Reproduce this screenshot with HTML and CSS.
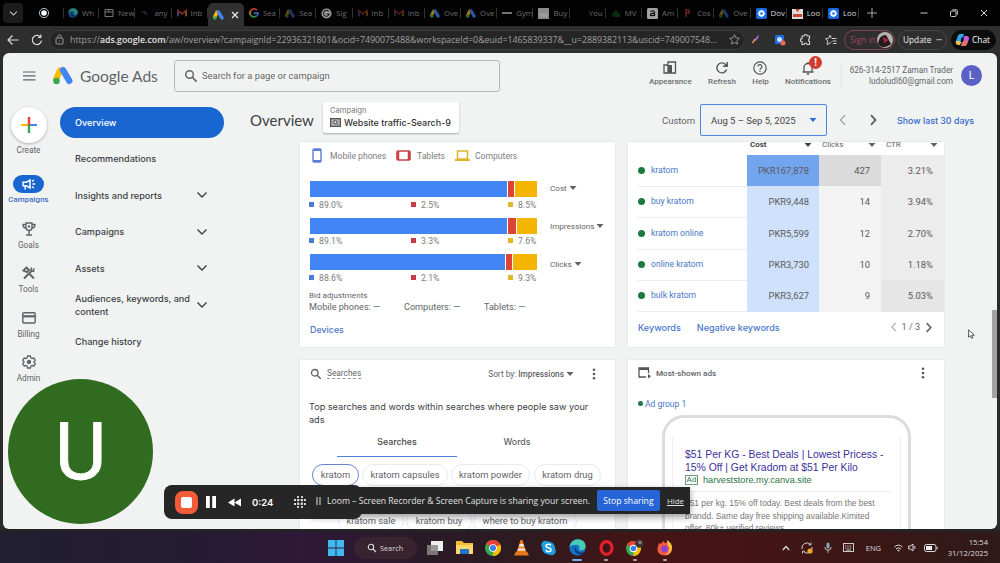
FILE: index.html
```
<!DOCTYPE html>
<html lang="en">
<head>
    <meta charset="UTF-8">
    <meta name="viewport" content="width=device-width, initial-scale=1.0">
    <title>Overview - Google Ads</title>
    <link rel="stylesheet" href="styles.css">
</head>
<body>

    <!-- Shared icons -->
    <svg class="defs" width="0" height="0">
        <symbol id="ads" viewBox="0 0 24 22">
            <path d="M8.5 5 3.6 15.5" stroke="#fbbc04" stroke-width="7.4" stroke-linecap="round"/>
            <path d="M12 4.6 19.6 17.4" stroke="#4285f4" stroke-width="7.6" stroke-linecap="round"/>
            <circle cx="4.2" cy="17.6" r="3.9" fill="#34a853"/>
        </symbol>
        <symbol id="gmail" viewBox="0 0 24 18">
            <path d="M2 17V3l10 8 10-8v14" fill="none" stroke="#c5432f" stroke-width="4"/>
            <path d="M2 17V6" stroke="#4a6fb5" stroke-width="4"/>
            <path d="M22 17V6" stroke="#b98a28" stroke-width="4"/>
        </symbol>
        <symbol id="chrome" viewBox="0 0 24 24">
            <circle cx="12" cy="12" r="12" fill="#34a853"/>
            <path d="M12 12 1.6 6A12 12 0 0 1 22.4 6z" fill="#ea4335"/>
            <path d="M12 12 22.4 6A12 12 0 0 1 12 24z" fill="#fbbc04"/>
            <path d="M10 6h12.4L20 9H10z" fill="#ea4335"/>
            <circle cx="12" cy="12" r="5.8" fill="#fff"/>
            <circle cx="12" cy="12" r="4.5" fill="#3b7ded"/>
        </symbol>
        <symbol id="edge" viewBox="0 0 24 24">
            <circle cx="12" cy="12" r="11.5" fill="#1670c4"/>
            <path d="M.8 11C2 4.5 7 .5 12.5 .5 19 .5 23.5 5 23.5 10c0 4-3 6-6 6-3 0-4-1.5-3-3 1-3-1-5-4.5-5C6 8 3 9 .8 11z" fill="#45cdb6"/>
            <path d="M9 11c-3 4 0 11 7 11 3-.5 5-2 6-4-6 2-12 0-13-7z" fill="#0d3e82"/>
        </symbol>
        <symbol id="loom" viewBox="0 0 20 20">
            <rect width="20" height="20" rx="3" fill="#1668e3"/>
            <circle cx="10" cy="10" r="4.5" fill="none" stroke="#fff" stroke-width="2.5"/>
            <path d="M10 3v14M3 10h14M5 5l10 10M15 5 5 15" stroke="#fff" stroke-width="1.2"/>
            <circle cx="10" cy="10" r="2" fill="#1668e3"/>
        </symbol>
        <symbol id="search" viewBox="0 0 24 24">
            <circle cx="9.5" cy="9.5" r="6.5" fill="none" stroke="currentColor" stroke-width="2.6"/>
            <path d="m14.5 14.5 7 7" stroke="currentColor" stroke-width="3"/>
        </symbol>
        <symbol id="down" viewBox="0 0 12 12">
            <path d="m1.5 3.5 4.5 4.5 4.5-4.5" fill="none" stroke="currentColor" stroke-width="1.4"/>
        </symbol>
        <symbol id="left" viewBox="0 0 12 12">
            <path d="M8 1.2 3.5 6 8 10.8" fill="none" stroke="currentColor" stroke-width="1.4"/>
        </symbol>
        <symbol id="right" viewBox="0 0 12 12">
            <path d="M4 1.2 8.5 6 4 10.8" fill="none" stroke="currentColor" stroke-width="1.7"/>
        </symbol>
        <symbol id="tri" viewBox="0 0 8 8">
            <path d="M.5 2h7L4 6z" fill="currentColor"/>
        </symbol>
        <symbol id="dots" viewBox="0 0 4 14">
            <circle cx="2" cy="2" r="1.5"/><circle cx="2" cy="7" r="1.5"/><circle cx="2" cy="12" r="1.5"/>
        </symbol>
    </svg>

    <!-- Browser tabs -->
    <div class="tabs">
        <div class="tab-list"><svg width="9" height="9"><use href="#down"/></svg></div>
        <svg class="rec" width="12" height="12" viewBox="0 0 12 12"><circle cx="6" cy="6" r="4.6" fill="none" stroke="#a9bccb" stroke-width="1"/><circle cx="6" cy="6" r="2.8" fill="#fff"/></svg>
        <div class="tab first"><svg class="dim" width="10" height="10"><use href="#edge"/></svg><span>Wh</span></div>
        <div class="tab"><svg width="10" height="10" viewBox="0 0 10 10"><path d="M1 1.5h8v7H1zM1 4h8M4.5 1.5V4" fill="none" stroke="#777"/></svg><span>New</span></div>
        <div class="tab"><svg width="10" height="10" viewBox="0 0 10 10"><path d="M2 3l5 4M4 3l3 3" stroke="#1b2533" stroke-width="1.5"/></svg><span>any</span></div>
        <div class="tab"><svg class="dim" width="10" height="8"><use href="#gmail"/></svg><span>Inb</span></div>
        <div class="tab active"><svg width="11" height="10"><use href="#ads"/></svg><svg width="8" height="8" viewBox="0 0 8 8"><path d="m1 1 6 6M7 1 1 7" stroke="#eee" stroke-width="1.2"/></svg></div>
        <div class="tab"><svg width="10" height="10" viewBox="0 0 20 20" fill="none" stroke-width="3.5"><path d="M16 4.5A8 8 0 0 0 3 6" stroke="#b63b30"/><path d="M3 6a8 8 0 0 0 0 8" stroke="#b48a1c"/><path d="M3 14a8 8 0 0 0 12 2" stroke="#2d8a46"/><path d="M15 16c2-1 3-3 3-6h-8" stroke="#3869bd"/></svg><span>Sea</span></div>
        <div class="tab"><svg class="dimmer" width="10" height="9"><use href="#ads"/></svg><span>Sea</span></div>
        <div class="tab"><svg width="11" height="11" viewBox="0 0 12 12"><circle cx="6" cy="6" r="5.5" fill="#999"/><path d="M8.5 4A3.2 3.2 0 1 0 9 6.5H6" fill="none" stroke="#222" stroke-width="1.2"/></svg><span>Sig</span></div>
        <div class="tab"><svg class="dimmer" width="10" height="8"><use href="#gmail"/></svg><span>Inb</span></div>
        <div class="tab"><svg class="dimmer" width="10" height="8"><use href="#gmail"/></svg><span>Inb</span></div>
        <div class="tab"><svg class="dim" width="10" height="9"><use href="#ads"/></svg><span>Ove</span></div>
        <div class="tab"><svg class="dim" width="10" height="9"><use href="#ads"/></svg><span>Ove</span></div>
        <div class="tab"><svg width="10" height="10" viewBox="0 0 10 10"><path d="M0 5h10" stroke="#999" stroke-width="1.5"/></svg><span>Gym</span></div>
        <div class="tab"><svg width="11" height="11" viewBox="0 0 11 11"><path d="M0 0h11v11H0z" fill="#8b8b8b"/><path d="M1 6h9M2 8h7" stroke="#aaa"/></svg><span>Buy</span></div>
        <div class="tab"><svg width="10" height="10"></svg><span>You</span></div>
        <div class="tab"><svg width="10" height="10" viewBox="0 0 10 10"><path d="M1 6h8M3 4h4M2 8h7" stroke="#0b3a18" stroke-width="1.5"/></svg><span>MV</span></div>
        <div class="tab"><svg width="11" height="11" viewBox="0 0 11 11"><rect width="11" height="11" rx="1.5" fill="#a2a2a2"/><path d="M3.5 3.5q4-1.500 4 1v3.500M7.500 5.500c-6-1-5 4 0 1.500" fill="none" stroke="#111" stroke-width="1.2"/></svg><span>Am</span></div>
        <div class="tab"><svg width="10" height="10" viewBox="0 0 10 10"><path d="M3 1v8M3 2h3v3H3" fill="none" stroke="#6d2323" stroke-width="1.5"/></svg><span>Cos</span></div>
        <div class="tab"><svg class="dimmer" width="10" height="9"><use href="#ads"/></svg><span>Ove</span></div>
        <div class="tab lit"><svg width="11" height="11"><use href="#loom"/></svg><span>Dov</span></div>
        <div class="tab lit"><svg width="11" height="11" viewBox="0 0 11 11"><path d="M0 1h11v10H0z" fill="#ddd"/><path d="M3 1 5.5 4 8 1zM1 6h9v3H1z" fill="#c74935"/></svg><span>Loo</span></div>
        <div class="tab lit"><svg width="11" height="11"><use href="#loom"/></svg><span>Loo</span></div>
        <svg class="new-tab" width="10" height="10" viewBox="0 0 10 10"><path d="M5 0v10M0 5h10" stroke="#aaa"/></svg>
        <div class="win-buttons">
            <svg width="8" height="8" viewBox="0 0 8 8"><path d="M.5 4h7" stroke="#ccc"/></svg>
            <svg width="8" height="8" viewBox="0 0 8 8" fill="none" stroke="#ccc"><rect x=".5" y="2" width="5.5" height="5.5" rx="1"/><path d="M2.5 .8h4q.8 0 .8.8v4"/></svg>
            <svg width="8" height="8" viewBox="0 0 8 8"><path d="m1 1 6 6M7 1 1 7" stroke="#ddd"/></svg>
        </div>
    </div>

    <!-- Address bar -->
    <div class="toolbar">
        <svg class="back" width="12" height="12" viewBox="0 0 12 12" fill="none" stroke="#ddd" stroke-width="1.2"><path d="M11.5 6H1.2M5.5 1.5 1 6l4.5 4.5"/></svg>
        <svg class="reload" width="12" height="12" viewBox="0 0 12 12" fill="none" stroke="#ddd" stroke-width="1.2"><path d="M10.5 6.5A4.6 4.6 0 1 1 9.3 2.8M9.8.5v3H7"/></svg>
        <div class="address">
            <svg width="9" height="11" viewBox="0 0 9 11" fill="none" stroke="#999"><rect x="1" y="4" width="7" height="6" rx="1"/><path d="M2.8 4V2.6a1.7 1.7 0 0 1 3.4 0V4M4.5 6.5v1"/></svg>
            <span class="url">https://<b>ads.google.com</b>/aw/overview?campaignId=22936321801&amp;ocid=7490075488&amp;workspaceId=0&amp;euid=1465839337&amp;__u=2889382113&amp;uscid=749007548...</span>
            <svg width="11" height="11" viewBox="0 0 12 12" fill="none" stroke="#999"><path d="m6 .8 1.6 3.4 3.7.5-2.700 2.600.7 3.700L6 9.200 2.700 11l.7-3.700L.7 4.700l3.700-.5z"/></svg>
        </div>
        <div class="extensions">
            <svg width="10" height="10" viewBox="0 0 10 10"><path d="M1.5 9 4 5" stroke="#e88b58" stroke-width="1.5"/><path d="m3.5 6 4-5.5Q8 4 4.5 7z" fill="#a678e2"/></svg>
            <svg width="12" height="12" viewBox="0 0 12 12"><rect x="1" y="1" width="9" height="9" rx="1" fill="#1f6be0"/><circle cx="5.5" cy="5.5" r="2.5" fill="#cfe0ff"/><circle cx="9" cy="9" r="2.5" fill="#ef6a4a"/></svg>
            <svg width="12" height="12" viewBox="0 0 12 12" fill="none" stroke="#ccc" stroke-width="1.2"><path d="M2 2h2.200a1.500 1.500 0 0 1 3 0H9.500v2.600a1.600 1.600 0 0 0 0 3V10.500H7a1.500 1.500 0 0 0-3 0H2V7.800a1.600 1.600 0 0 1 0-3.200z"/></svg>
            <svg width="12" height="12" viewBox="0 0 12 12" fill="none" stroke="#ccc"><path d="M6.5 7.8 5 9.2 2 10.5 2.7 7 .6 4.7 3.7 4.2 5 1.2l1.300 3M7 4.500h4.500M7.500 7h4M8 9.500h3.500"/></svg>
        </div>
        <div class="signin">Sign in <svg width="16" height="16" viewBox="0 0 16 16"><circle cx="8" cy="8" r="8" fill="#b7aeb0"/><path d="M1 12Q2 3 9 3l5 9q-6 5-11 2z" fill="#25191c"/><path d="m6 5 6 3-5 3z" fill="#a02940"/></svg></div>
        <div class="update">Update <span>•••</span></div>
        <div class="chat">
            <svg width="15" height="14" viewBox="0 0 15 14"><path d="M5 1h4L6 11H2Q0 10 1 8l2-5.500Q3.500 1 5 1z" fill="#2da5e8"/><path d="M1 8h5l-1 4H3Q0 11 1 8z" fill="#e8c34b"/><path d="M9 3h3.500q2 1 1.500 3l-2 5q-.5 2-2.500 2H6z" fill="#c45be0"/><path d="m6 13 2-5h5l-1.500 4q-.5 1-2 1z" fill="#f0715b"/><path d="M6.500 4.500h2.500L8 9H5.500z" fill="#101018"/></svg>
            Chat
        </div>
    </div>

    <!-- Page -->
    <div class="page">
        <header class="top">
            <svg class="burger" width="13" height="10" viewBox="0 0 13 10"><path d="M0 1h12.5M0 4.9h12.5M0 8.8h12.5" stroke="#5f6368" stroke-width="1.2"/></svg>
            <svg class="logo" width="20" height="19"><use href="#ads"/></svg>
            <div class="brand">Google Ads</div>
            <div class="search-box"><svg width="14" height="14"><use href="#search"/></svg>Search for a page or campaign</div>
            <div class="tools">
                <div class="tool"><svg width="14" height="14" viewBox="0 0 14 14"><path d="M1 4h4v8H1zM5 1h7.5v11H5z" fill="none" stroke="#555" stroke-width="1.3"/><path d="M5 4h4v8H5z" fill="#555"/></svg>Appearance</div>
                <div class="tool"><svg width="14" height="14" viewBox="0 0 14 14" fill="none" stroke="#555" stroke-width="1.4"><path d="M11.6 8.6A5 5 0 1 1 10.5 3.4L12 5M12.2 1v4.3H8"/></svg>Refresh</div>
                <div class="tool"><svg width="14" height="14" viewBox="0 0 14 14" fill="none" stroke="#555" stroke-width="1.2"><circle cx="7" cy="7" r="6.2"/><path d="M5 5.6a2 2 0 1 1 3 1.7c-.8.5-1 .8-1 1.5M7 9.8v1.3"/></svg>Help</div>
                <div class="tool"><svg width="14" height="14" viewBox="0 0 14 14" fill="none" stroke="#555" stroke-width="1.3"><path d="M1.5 11h11M3 11V6.5a4 4 0 0 1 8 0V11M5.8 13h2.4M7 1v1.5"/></svg><i>!</i>Notifications</div>
            </div>
            <div class="account"><div>626-314-2517 Zaman Trader</div><div>ludoludl60@gmail.com</div></div>
            <div class="avatar">L</div>
        </header>

        <div class="layout">
            <aside class="rail">
                <div class="create"><svg width="16" height="16" viewBox="0 0 16 16"><path d="M0 8h7" stroke="#fbbc04" stroke-width="2"/><path d="M9 8h7" stroke="#4285f4" stroke-width="2"/><path d="M8 0v8" stroke="#ea4335" stroke-width="2.4"/><path d="M8 8v8" stroke="#34a853" stroke-width="2.4"/></svg></div>
                <div class="create-label">Create</div>
                <div class="rail-item on"><div class="ico"><svg width="14" height="12" viewBox="0 0 14 12" fill="none" stroke="#fff" stroke-width="1.5"><path d="M1 4.2h3.5L8 2v8L4.5 7.8H1zM3.2 8v3.5M10 3.5 12 2M10.5 6h2.7M10 8.5l2 1.5"/></svg></div>Campaigns</div>
                <div class="rail-item"><div class="ico"><svg width="14" height="14" viewBox="0 0 14 14" fill="none" stroke="#5f6368" stroke-width="1.4"><path d="M4 1h6v4.500a3 3 0 0 1-6 0zM4 2.500H1Q1 6 4 6M10 2.500h3Q13 6 10 6M7 8.500v4M4 13h6"/><circle cx="7" cy="4.500" r=".5"/></svg></div>Goals</div>
                <div class="rail-item"><div class="ico"><svg width="14" height="14" viewBox="0 0 14 14" fill="none" stroke="#5f6368"><path d="m2 12.5 8-8" stroke-width="2"/><path d="M9.5 1.5Q8 5 12.5 5.500M12.500 2.500 11 4" stroke-width="1.5"/><path d="m7.5 8 4.5 4.5M1.500 4.500l3-3 2.500 2.500-2 2z" stroke-width="1.9"/></svg></div>Tools</div>
                <div class="rail-item"><div class="ico"><svg width="14" height="12" viewBox="0 0 14 12"><rect x=".8" y=".8" width="12.4" height="10.2" rx="1" fill="none" stroke="#5f6368" stroke-width="1.4"/><path d="M1 4.300h12" stroke="#5f6368" stroke-width="2.2"/></svg></div>Billing</div>
                <div class="rail-item"><div class="ico"><svg width="14" height="14" viewBox="0 0 14 14" fill="none" stroke="#5f6368" stroke-width="1.3"><path d="M5.6 1h2.800l.5 1.800 1.200.7 1.800-.5 1.400 2.400L12 6.700v.6l1.300 1.300-1.400 2.400-1.800-.5-1.200.7-.5 1.800H5.600l-.5-1.800-1.200-.7-1.800.5L.7 8.600 2 7.300v-.6L.7 5.400 2.100 3l1.800.5 1.200-.7z"/><circle cx="7" cy="7" r="1.5" fill="#5f6368"/></svg></div>Admin</div>
            </aside>

            <nav class="nav">
                <div class="nav-item current">Overview</div>
                <div class="nav-item">Recommendations</div>
                <div class="nav-item">Insights and reports<svg width="12" height="12"><use href="#down"/></svg></div>
                <div class="nav-item">Campaigns<svg width="12" height="12"><use href="#down"/></svg></div>
                <div class="nav-item">Assets<svg width="12" height="12"><use href="#down"/></svg></div>
                <div class="nav-item"><span>Audiences, keywords, and<br>content</span><svg width="12" height="12"><use href="#down"/></svg></div>
                <div class="nav-item">Change history</div>
            </nav>

            <main class="main">
                <div class="main-head">
                    <h1>Overview</h1>
                    <div class="campaign">
                        <small>Campaign</small>
                        <div><svg width="11" height="9" viewBox="0 0 11 9"><rect x=".6" y=".6" width="9.8" height="7.8" fill="#aaa" stroke="#555" stroke-width="1.2"/><circle cx="5.3" cy="4.2" r="1.6" fill="#ddd" stroke="#555"/><path d="m6.5 5.5 1.5 1.5" stroke="#555"/></svg><span>Website traffic-Search-9</span></div>
                    </div>
                    <span class="custom">Custom</span>
                    <div class="date"><span>Aug 5 – Sep 5, 2025</span><svg width="8" height="8"><use href="#tri"/></svg></div>
                    <svg class="prev" width="12" height="12"><use href="#left"/></svg>
                    <svg class="next" width="12" height="12"><use href="#right"/></svg>
                    <a class="last30">Show last 30 days</a>
                </div>

                <div class="cards">
                    <section class="card devices">
                        <div class="legend">
                            <svg width="10" height="15" viewBox="0 0 10 15"><rect x="1" y="1" width="8" height="13" rx="1" fill="#fff" stroke="#5b7fd8" stroke-width="1.4"/><path d="M1 2h8M1 13h8" stroke="#5b7fd8" stroke-width="2"/></svg><span class="l1">Mobile phones</span>
                            <svg width="15" height="11" viewBox="0 0 15 11"><rect x="1" y="1" width="13" height="9" rx="1" fill="#fff" stroke="#c9424a" stroke-width="1.5"/><path d="M2 1v9M13 1v9" stroke="#c9424a" stroke-width="2.5"/></svg><span class="l2">Tablets</span>
                            <svg width="15" height="11" viewBox="0 0 15 11"><path d="M2.5 1h10v8h-10z" fill="#fff" stroke="#dcb52a" stroke-width="1.5"/><path d="M0 10h15" stroke="#dcb52a" stroke-width="2"/></svg><span class="l3">Computers</span>
                        </div>
                        <div class="metric">
                            <div class="bar"><i class="blue" style="width:197px"></i><i class="red" style="width:6px"></i><i class="yellow"></i></div>
                            <div class="name cost-name">Cost <svg width="8" height="8"><use href="#tri"/></svg></div>
                            <div class="pcts"><span class="blue">89.0%</span><span class="red">2.5%</span><span class="yellow">8.5%</span></div>
                        </div>
                        <div class="metric">
                            <div class="bar"><i class="blue" style="width:197px"></i><i class="red" style="width:8px"></i><i class="yellow"></i></div>
                            <div class="name">Impressions <svg width="8" height="8"><use href="#tri"/></svg></div>
                            <div class="pcts"><span class="blue">89.1%</span><span class="red">3.3%</span><span class="yellow">7.6%</span></div>
                        </div>
                        <div class="metric">
                            <div class="bar"><i class="blue" style="width:195px"></i><i class="red" style="width:6px"></i><i class="yellow"></i></div>
                            <div class="name clicks-name">Clicks <svg width="8" height="8"><use href="#tri"/></svg></div>
                            <div class="pcts"><span class="blue">88.6%</span><span class="red">2.1%</span><span class="yellow">9.3%</span></div>
                        </div>
                        <div class="bid-title">Bid adjustments</div>
                        <div class="bids"><span>Mobile phones: —</span><span>Computers: —</span><span>Tablets: —</span></div>
                        <a class="devices-link">Devices</a>
                    </section>

                    <section class="card keywords">
                        <div class="thead">
                            <span></span>
                            <b>Cost<svg width="8" height="8"><use href="#tri"/></svg></b>
                            <span>Clicks<svg width="8" height="8"><use href="#tri"/></svg></span>
                            <span>CTR<svg width="8" height="8"><use href="#tri"/></svg></span>
                        </div>
                        <div class="row top-row"><a>kratom</a><span class="cost">PKR167,878</span><span class="clicks">427</span><span class="ctr">3.21%</span></div>
                        <div class="row"><a>buy kratom</a><span class="cost">PKR9,448</span><span class="clicks">14</span><span class="ctr">3.94%</span></div>
                        <div class="row"><a>kratom online</a><span class="cost">PKR5,599</span><span class="clicks">12</span><span class="ctr">2.70%</span></div>
                        <div class="row"><a>online kratom</a><span class="cost">PKR3,730</span><span class="clicks">10</span><span class="ctr">1.18%</span></div>
                        <div class="row"><a>bulk kratom</a><span class="cost">PKR3,627</span><span class="clicks">9</span><span class="ctr dark">5.03%</span></div>
                        <div class="foot">
                            <a>Keywords</a><a class="neg">Negative keywords</a>
                            <div class="pager"><svg class="off" width="10" height="10"><use href="#left"/></svg>1 / 3<svg width="11" height="11"><use href="#right"/></svg></div>
                        </div>
                    </section>

                    <section class="card searches">
                        <div class="card-head">
                            <svg width="12" height="12"><use href="#search"/></svg>
                            <span class="dotted">Searches</span>
                            <span class="sort">Sort by: <b>Impressions</b> <svg width="8" height="8"><use href="#tri"/></svg></span>
                            <svg class="more" width="4" height="12"><use href="#dots"/></svg>
                        </div>
                        <p>Top searches and words within searches where people saw your<br>ads</p>
                        <div class="switch"><div class="sel">Searches</div><div>Words</div></div>
                        <div class="chips">
                            <span class="chip sel c1">kratom</span><span class="chip c2">kratom capsules</span><span class="chip c3">kratom powder</span><span class="chip c4">kratom drug</span>
                        </div>
                        <div class="chips second">
                            <span class="chip c5">kratom sale</span><span class="chip c6">kratom buy</span><span class="chip c7">where to buy kratom</span>
                        </div>
                    </section>

                    <section class="card ads">
                        <div class="card-head">
                            <svg width="13" height="12" viewBox="0 0 13 12" fill="none" stroke="#555"><path d="M8 10H1V1h9.5v5" stroke-width="1.3"/><path d="M1 2h9.5" stroke-width="2"/><path d="m10 7v4.500l3-2.200z" fill="#555" stroke="none"/></svg>
                            <span class="shown">Most-shown ads</span>
                            <svg class="more" width="4" height="12"><use href="#dots"/></svg>
                        </div>
                        <a class="group">Ad group 1</a>
                        <div class="phone">
                            <div class="screen">
                                <div class="ad-title">$51 Per KG - Best Deals | Lowest Pricess -<br>15% Off | Get Kradom at $51 Per Kilo</div>
                                <div class="ad-url"><i>Ad</i>harveststore.my.canva.site</div>
                                <div class="ad-text">$51 per kg. 15% off today. Best deals from the best<br>brandd. Same day free shipping available.Kimited<br>offer. 80k+ verified reviews.</div>
                            </div>
                        </div>
                    </section>
                </div>
            </main>
        </div>
        <div class="scrollbar"></div>
    </div>

    <!-- Taskbar -->
    <div class="taskbar">
        <svg class="win" width="16" height="16" viewBox="0 0 16 16" fill="#43b9f2"><path d="M0 0h7.6v7.6H0zM8.4 0H16v7.6H8.4zM0 8.4h7.6V16H0zM8.4 8.4H16V16H8.4z"/></svg>
        <div class="task-search"><svg width="10" height="10"><use href="#search"/></svg>Search</div>
        <svg class="task t1" width="16" height="14" viewBox="0 0 16 14"><path d="M4 0h12v10H4z" fill="#eee"/><path d="M0 4h11v10H0z" fill="#888" opacity=".85"/></svg>
        <svg class="task" width="17" height="15" viewBox="0 0 17 15"><path d="M0 1h6l2 2h9v11H0z" fill="#f5b92e"/><path d="M0 5h17v9H0z" fill="#fdd768"/><path d="M4 9h9v5H4z" fill="#2475c7"/></svg>
        <svg class="task" width="16" height="16"><use href="#chrome"/></svg>
        <svg class="task" width="15" height="16" viewBox="0 0 15 16"><path d="M6.5 0h2L12 12H3z" fill="#ee8521"/><path d="M5.6 4h3.8l.8 2.500H4.800zM4 8.500h7l.7 2H3.400z" fill="#f1e7df"/><path d="M2 11.500h11l2 4H0z" fill="#e67817"/></svg>
        <svg class="task" width="15" height="16" viewBox="0 0 15 16"><circle cx="7.5" cy="8" r="6.5" fill="#1d9ce0"/><circle cx="4.5" cy="5" r="4.3" fill="#1d9ce0"/><circle cx="10.5" cy="11" r="4.3" fill="#1d9ce0"/><path d="M10 5.300Q9 4 7.300 4.200 5 4.400 5 6q0 1.300 2.500 1.800T10 9.900q0 1.700-2.500 1.800-1.800 0-2.800-1.500" fill="none" stroke="#fff" stroke-width="1.5"/></svg>
        <div class="task open wide"><svg width="17" height="17"><use href="#edge"/></svg></div>
        <div class="task open"><svg width="15" height="16" viewBox="0 0 15 16"><ellipse cx="7.5" cy="8" rx="5.5" ry="6.3" fill="none" stroke="#e4202c" stroke-width="3.2"/></svg></div>
        <div class="task open"><svg width="18" height="17" viewBox="0 0 18 17"><g transform="translate(0 2) scale(.62)"><circle cx="12" cy="12" r="12" fill="#34a853"/><path d="M12 12 1.6 6A12 12 0 0 1 22.4 6z" fill="#ea4335"/><path d="M12 12 22.4 6A12 12 0 0 1 12 24z" fill="#fbbc04"/><circle cx="12" cy="12" r="6" fill="#fff"/><circle cx="12" cy="12" r="4.5" fill="#3b7ded"/></g><circle cx="13.5" cy="4.5" r="4.3" fill="#3a3638"/><circle cx="14" cy="3.5" r="1.7" fill="#8b8080"/></svg></div>
        <div class="task open"><svg width="16" height="16" viewBox="0 0 16 16"><path d="M2 3l2 1 2-3 2 2q5-1 7 3 1 9-7 9.500Q-1 15 .8 7z" fill="#f9593f"/><path d="M10 0q5 3 5 8-1 6-7 7 5-3 4-8-2-2-2-7z" fill="#fcc436"/><circle cx="7.5" cy="9" r="3.4" fill="#8a45d5"/></svg></div>
        <div class="tray">
            <svg width="8" height="8" viewBox="0 0 8 8"><path d="m.8 6 3.200-3.500L7.200 6" fill="none" stroke="#ddd" stroke-width="1.2"/></svg>
            <svg class="sync" width="12" height="12" viewBox="0 0 12 12"><path d="M1 7A5 5 0 0 1 9.500 2.500M10 .5v2.300H7.600M11 5a5 5 0 0 1-8 5M1.500 11.500V9.200H4" fill="none" stroke="#ccc"/><circle cx="9" cy="9" r="2.6" fill="#f5a623"/></svg>
            <svg class="mic" width="8" height="11" viewBox="0 0 8 11"><rect x="2.5" y=".5" width="3" height="6" rx="1.5" fill="#8ba6b4"/><path d="M.8 5a3.200 3.200 0 0 0 6.400 0M4 8.300v2.500" fill="none" stroke="#bbb"/></svg>
            <svg class="kbd" width="11" height="9" viewBox="0 0 11 9"><rect x=".5" y=".5" width="10" height="8" fill="none" stroke="#ccc"/><path d="M2 3h7M2 5h7" stroke="#ccc" stroke-dasharray="1 .7"/><path d="M3 7h5" stroke="#ccc"/></svg>
            <span class="lang">ENG</span>
            <svg width="9" height="8" viewBox="0 0 9 8" fill="none" stroke="#ddd"><path d="M.5 3Q4.500-.8 8.500 3M2 5Q4.500 2.500 7 5"/><circle cx="4.5" cy="6.5" r=".6"/></svg>
            <svg class="vol" width="9" height="9" viewBox="0 0 9 9" fill="none" stroke="#ddd"><path d="M.7 3h1.800L5 1v7L2.500 6H.7zM6.500 3q1 1.500 0 3"/></svg>
            <svg class="bat" width="14" height="8" viewBox="0 0 14 8"><rect x=".5" y=".5" width="11.5" height="7" rx="2" fill="none" stroke="#ddd"/><path d="M2 2h6v4H2z" fill="#eee"/><path d="M13.200 3v2" stroke="#ddd"/></svg>
            <div class="clock">15:54<br>31/12/2025</div>
        </div>
    </div>

    <!-- Screen recorder overlays -->
    <div class="bubble">U</div>
    <div class="sharing">
        <svg width="5" height="8" viewBox="0 0 5 8"><path d="M1 0v8M4 0v8" stroke="#ccc" stroke-width="1.1"/></svg>
        <span class="msg">Loom – Screen Recorder &amp; Screen Capture is sharing your screen.</span>
        <button>Stop sharing</button>
        <a>Hide</a>
    </div>
    <div class="recorder">
        <div class="stop"></div>
        <svg class="pause" width="10" height="12" viewBox="0 0 10 12"><path d="M0 0h3.8v12H0zM6.2 0H10v12H6.2z" fill="#fff"/></svg>
        <svg class="rewind" width="13" height="9" viewBox="0 0 13 9"><path d="M6.5.5v8L0 4.500zM13 .5v8L6.500 4.500z" fill="#fff"/></svg>
        <span>0:24</span>
        <svg class="grip" width="12" height="12" viewBox="0 0 12 12"><path d="M4 0v12M8 0v12M0 4h12M0 8h12" stroke="#ddd" stroke-width="1.8" stroke-dasharray="2 1.3"/></svg>
    </div>
    <svg class="cursor" width="7" height="10" viewBox="0 0 7 10"><path d="M.6.8v7.4l1.800-1.500 1.200 2.600 1.300-.6-1.100-2.500h2.500z" fill="#fff" stroke="#444" stroke-width=".9"/></svg>

</body>
</html>
```
FILE: styles.css
```
* {
    box-sizing: border-box;
}

body {
    margin: 0;
    width: 1000px;
    height: 563px;
    overflow: hidden;
    background: #2b2b2b;
    font-family: Roboto, Arial, sans-serif;
    font-size: 9px;
    color: #5f6368;
    position: relative;
    white-space: nowrap;
}

svg {
    display: block;
    flex: none;
}

.defs {
    position: absolute;
}

/* Browser tabs */
.tabs {
    height: 26px;
    background: #020202;
    display: flex;
    align-items: center;
    font-family: "Open Sans", "Noto Sans", sans-serif;
    font-size: 7.8px;
    color: #6c6c6c;
}

.tab-list {
    width: 20px;
    height: 20px;
    margin-left: 3px;
    border-radius: 4px;
    background: #1c1c1c;
    color: #ccc;
    display: flex;
    align-items: center;
    justify-content: center;
}

.rec {
    margin: 0 13px 0 15px;
}

.tab {
    width: 36.2px;
    height: 26px;
    padding-left: 5px;
    display: flex;
    align-items: center;
    gap: 4px;
    flex: none;
    background: linear-gradient(#333, #333) right center / 1px 10px no-repeat;
}

.tab.first {
    background: linear-gradient(#333, #333) right center / 1px 10px no-repeat, linear-gradient(#333, #333) left center / 1px 10px no-repeat;
}

.tab.active {
    background: #303030;
    height: 23px;
    margin-top: 3px;
    border-radius: 5px 5px 0 0;
    gap: 7px;
}

.tab.lit {
    color: #ddd;
}

.dim {
    opacity: .65;
}

.dimmer {
    opacity: .4;
}

.new-tab {
    margin-left: 8px;
}

.win-buttons {
    display: flex;
    gap: 22px;
    margin-left: 43px;
}

/* Address bar */
.toolbar {
    height: 27px;
    background: #2e2e2e;
    display: flex;
    align-items: center;
    font-family: "Open Sans", "Noto Sans", sans-serif;
    color: #a0a0a0;
}

.back {
    margin-left: 7px;
}

.reload {
    margin-left: 12px;
}

.address {
    width: 696px;
    height: 20px;
    margin-left: 6px;
    padding: 0 4px 0 5px;
    border: 1px solid #3d3d3d;
    border-radius: 10px;
    background: #252525;
    display: flex;
    align-items: center;
    flex: none;
}

.url {
    margin-left: 6px;
    flex: 1;
    font-size: 8.78px;
}

.url b {
    color: #e4e4e4;
    font-weight: 600;
}

.extensions {
    width: 86px;
    display: flex;
    flex: none;
    justify-content: space-between;
    margin: 0 7px 0 6px;
}

.signin, .update, .chat {
    height: 20px;
    border-radius: 10px;
    display: flex;
    flex: none;
    align-items: center;
    justify-content: space-between;
    font-size: 8.3px;
}

.signin {
    width: 51px;
    border: 1px solid #7c4655;
    color: #a4465d;
    padding: 0 1px 0 5px;
}

.update {
    width: 49px;
    margin-left: 3px;
    padding: 0 4px;
    border: 1px solid #464646;
    color: #eee;
}

.update span {
    font-size: 5px;
}

.chat {
    width: 45px;
    margin-left: 4px;
    padding: 0 6px 0 4px;
    background: #0c0c0c;
    color: #fff;
}

/* Page frame */
.page {
    width: 994px;
    height: 476px;
    margin-left: 3px;
    background: #f1f3f3;
    border-radius: 6px;
    overflow: hidden;
    position: relative;
}

.top {
    height: 45px;
    display: flex;
    align-items: center;
}

.burger {
    margin-left: 20px;
}

.logo {
    margin-left: 17px;
}

.brand {
    width: 94px;
    margin-left: 7px;
    font-family: Lato, sans-serif;
    font-size: 15.5px;
    color: #5f6368;
}

.search-box {
    width: 326px;
    height: 32px;
    padding-left: 9px;
    border: 1px solid #b4b8bb;
    border-radius: 3px;
    display: flex;
    align-items: center;
    gap: 4px;
    font-size: 9.4px;
    color: #666;
}

.tools {
    width: 182px;
    margin-left: 149px;
    display: flex;
    justify-content: space-between;
}

.tool {
    position: relative;
    top: -2px;
    display: flex;
    flex-direction: column;
    align-items: center;
    gap: 1px;
    font-size: 8px;
    line-height: 11px;
    font-weight: 500;
    color: #6b6e72;
}

.tool i {
    position: absolute;
    left: 24px;
    top: -5px;
    width: 13px;
    height: 13px;
    border-radius: 50%;
    background: #d13a2c;
    color: #fff;
    font-style: normal;
    font-weight: 700;
    font-size: 10px;
    line-height: 13px;
    text-align: center;
}

.account {
    width: 112px;
    height: 24px;
    margin-left: 10px;
    border-left: 1px solid #e4e6e6;
    text-align: right;
    font-size: 8.2px;
    line-height: 11px;
    padding-top: 1px;
}

.avatar {
    width: 21px;
    height: 21px;
    margin-left: 8px;
    border-radius: 50%;
    background: #5a60c4;
    color: #fff;
    text-align: center;
    font-size: 10.5px;
    line-height: 21px;
}

.layout {
    display: flex;
    height: 431px;
}

/* Icon rail */
.rail {
    width: 51px;
    padding-top: 9px;
    display: flex;
    flex-direction: column;
    align-items: center;
    font-size: 8.2px;
}

.create {
    width: 36px;
    height: 36px;
    border-radius: 50%;
    background: #fff;
    box-shadow: 0 1px 3px rgba(0, 0, 0, .28);
    display: flex;
    align-items: center;
    justify-content: center;
}

.create-label {
    margin-top: 3px;
    height: 29px;
    line-height: 9px;
}

.rail-item {
    height: 44.5px;
    flex: none;
    line-height: 12px;
    display: flex;
    flex-direction: column;
    align-items: center;
    gap: 1px;
}

.ico {
    width: 31px;
    height: 18px;
    border-radius: 9px;
    display: flex;
    align-items: center;
    justify-content: center;
}

.on {
    color: #3f6fc2;
    font-weight: 500;
    font-size: 8px;
}

.on .ico {
    background: #1a66d0;
}

/* Side navigation */
.nav {
    width: 183px;
    padding: 6px 13px 0 6px;
    font-family: Inter, Roboto, sans-serif;
    font-weight: 500;
    font-size: 9.15px;
    color: #3c4043;
}

.nav-item {
    height: 36.5px;
    padding: 0 16px 0 15px;
    display: flex;
    align-items: center;
    justify-content: space-between;
    line-height: 13px;
}

.nav-item.current {
    height: 31px;
    margin: 3px 0 2.5px;
    border-radius: 16px;
    background: #1a66d0;
    color: #fff;
}

/* Main column */
.main {
    width: 760px;
}

.main-head {
    height: 44px;
    padding-left: 13px;
    display: flex;
    align-items: center;
}

h1 {
    width: 73px;
    margin: 0 0 1px;
    font-family: Lato, sans-serif;
    font-weight: 400;
    font-size: 15px;
    color: #3c4043;
}

.campaign {
    width: 136px;
    height: 31px;
    margin-bottom: 5px;
    padding: 4px 7px;
    border-radius: 2px;
    background: #fff;
    box-shadow: 0 1px 2px rgba(0, 0, 0, .3);
    font-family: Inter, sans-serif;
    color: #333;
}

.campaign small {
    display: block;
    font-size: 7.6px;
    line-height: 10px;
    color: #777;
}

.campaign div {
    display: flex;
    align-items: center;
    gap: 3px;
    font-size: 9px;
    font-weight: 500;
    line-height: 13px;
}

.custom {
    margin-left: 203px;
    width: 38px;
    font-size: 9.5px;
}

.date {
    width: 127px;
    height: 32px;
    padding: 0 9px 0 10px;
    border: 1.5px solid #4a86e0;
    border-radius: 2px;
    display: flex;
    align-items: center;
    justify-content: space-between;
    font-size: 9.5px;
    color: #444;
}

.date svg {
    color: #2a6cd6;
}

.prev {
    margin-left: 10px;
    color: #a6a6a6;
}

.next {
    margin-left: 18px;
    color: #555;
}

.last30 {
    margin-left: 18px;
    font-family: Inter, sans-serif;
    font-weight: 500;
    font-size: 8.85px;
    color: #2f66c8;
}

.cards {
    margin-left: 63px;
    display: grid;
    grid-template-columns: 315px 316px;
    grid-template-rows: 205px 180px;
    gap: 13px;
}

.card {
    background: #fff;
    box-shadow: 0 0 2px rgba(0, 0, 0, .1);
    overflow: hidden;
}

.card a {
    color: #4a76c8;
}

/* Devices card */
.legend {
    height: 39px;
    padding: 0 0 12px 12px;
    display: flex;
    align-items: center;
    font-size: 8.6px;
    color: #7c7c7c;
}

.l1 {
    width: 66px;
    margin-left: 8px;
}

.l2 {
    width: 38px;
    margin-left: 6px;
}

.l3 {
    margin-left: 5px;
}

.metric {
    height: 36.5px;
    padding-left: 10px;
    display: grid;
    grid-template-columns: 227px 1fr;
    grid-template-rows: 16px 15px;
    column-gap: 13px;
}

.bar {
    display: flex;
    gap: 1px;
}

.bar .yellow {
    flex: 1;
}

.bar .blue {
    background: #4285f4;
}

.bar .red {
    background: #db4437;
}

.bar .yellow {
    background: #f4b400;
}

.name {
    display: flex;
    align-items: center;
    gap: 2px;
    font-size: 8.1px;
}

.cost-name {
    padding-bottom: 2px;
}

.clicks-name {
    padding-top: 4px;
}

.pcts {
    display: grid;
    grid-template-columns: 102px 97px 40px;
    align-items: center;
    margin-left: -1px;
    font-size: 8.7px;
    color: #7c7c7c;
}

.pcts span::before {
    content: "";
    display: inline-block;
    width: 5px;
    height: 5px;
    margin-right: 5px;
    vertical-align: 1px;
}

.pcts .blue::before {
    background: #4c7bd9;
}

.pcts .red::before {
    background: #c43c48;
}

.pcts .yellow::before {
    background: #dfb928;
}

.bid-title {
    padding: 0 9px;
    font-size: 8.1px;
    line-height: 10px;
    margin-top: -1px;
}

.bids {
    display: grid;
    grid-template-columns: 95px 80px 60px;
    padding-left: 9px;
    font-size: 9.1px;
    line-height: 14px;
}

.devices-link {
    display: block;
    padding-left: 10px;
    margin-top: 9px;
    font-family: Inter, sans-serif;
    font-size: 8.9px;
    font-weight: 500;
    line-height: 14px;
}

/* Keywords card */
.thead {
    height: 13px;
    display: grid;
    grid-template-columns: 62px 54px 52px;
    column-gap: 10px;
    padding-left: 122px;
    font-size: 8px;
    overflow: hidden;
}

.thead span:first-child {
    display: none;
}

.thead b {
    color: #444;
}

.thead > * {
    display: flex;
    justify-content: space-between;
    line-height: 6px;
}

.thead svg {
    margin-top: -1px;
}

.row {
    height: 31.3px;
    padding-left: 10px;
    display: grid;
    grid-template-columns: 109px 72px 62px 63px;
    font-size: 9.4px;
    line-height: 31px;
    text-align: right;
    color: #5a5a5a;
}

.row a {
    text-align: left;
    font-size: 8.6px;
    border-bottom: 1px solid #ececec;
}

.row a::before {
    content: "";
    display: inline-block;
    width: 7px;
    height: 7px;
    margin-right: 6px;
    border-radius: 50%;
    background: #1c7a3e;
    vertical-align: -1px;
}

.cost {
    padding-right: 10px;
    background: #cfe1fc;
}

.clicks {
    padding-right: 11px;
    background: #f3f3f3;
}

.ctr {
    padding-right: 11px;
    background: #ececec;
}

.ctr.dark {
    background: #e6e6e6;
}

.top-row .cost {
    background: #72a5ee;
}

.top-row .clicks {
    background: #dbdbdb;
}

.foot {
    height: 32px;
    padding: 0 10px;
    display: flex;
    align-items: center;
    font-family: Inter, sans-serif;
    font-size: 9.05px;
    font-weight: 500;
}

.neg {
    margin-left: 16px;
}

.pager {
    margin-left: auto;
    display: flex;
    align-items: center;
    gap: 3px;
    font-family: Roboto, sans-serif;
    font-weight: 400;
}

.off {
    opacity: .5;
}

/* Searches card */
.card-head {
    height: 27px;
    padding: 0 19px 0 10px;
    display: flex;
    align-items: center;
    font-size: 8.3px;
}

.dotted {
    margin-left: 5px;
    border-bottom: 1px dashed #999;
    line-height: 10px;
}

.sort {
    margin-left: auto;
    display: flex;
    align-items: center;
    gap: 2px;
}

.sort b {
    font-weight: 500;
}

.more {
    margin-left: 18px;
    fill: #555;
}

.searches p {
    margin: 13px 0 0 9px;
    font-family: Inter, sans-serif;
    font-size: 9.13px;
    line-height: 13px;
    color: #3c4043;
}

.switch {
    display: flex;
    margin: 0 0 0 37px;
    font-family: Inter, sans-serif;
    font-weight: 500;
    font-size: 8.8px;
}

.switch div {
    width: 120px;
    height: 31px;
    line-height: 31px;
    text-align: center;
}

.switch .sel {
    border-bottom: 1.5px solid #4a80dc;
    color: #444;
}

.chips {
    display: flex;
    margin: 7px 0 0 12px;
}

.chip {
    height: 22px;
    border: 1px solid #e8eaf4;
    border-radius: 11px;
    line-height: 20px;
    text-align: center;
    font-size: 9.4px;
}

.chip.sel {
    border: 1.5px solid #6a85cf;
}

.c1 {
    width: 47px;
}

.c2 {
    width: 86px;
    margin-left: 3px;
}

.c3 {
    width: 79px;
    margin-left: 3px;
}

.c4 {
    width: 67px;
    margin-left: 4px;
}

.chips.second {
    margin: 24px 0 0 38px;
}

.c5 {
    width: 66px;
}

.c6 {
    width: 66px;
    margin-left: 2px;
}

.c7 {
    width: 104px;
    margin-left: 1px;
}

/* Ads card */
.ads .card-head {
    height: 26px;
}

.shown {
    margin-left: 5px;
    font-weight: 500;
    font-size: 8.1px;
}

.ads .more {
    margin-left: auto;
}

.group {
    display: block;
    margin: 11px 0 0 10px;
    font-size: 8.5px;
    line-height: 14px;
}

.group::before {
    content: "";
    display: inline-block;
    width: 5px;
    height: 5px;
    margin-right: 2px;
    border-radius: 50%;
    background: #1c7a3e;
    vertical-align: 1px;
}

.phone {
    width: 249px;
    height: 160px;
    margin: 4px 0 0 34px;
    padding: 18px 7px;
    border: 3px solid #dcdcdc;
    border-radius: 22px;
}

.screen {
    height: 160px;
    padding: 12px 10px 0 12px;
    border: 1px solid #f2f2f2;
    border-top: 0;
    font-family: "Liberation Sans", Arial, sans-serif;
}

.ad-title {
    font-size: 10.4px;
    line-height: 13px;
    color: #3d2f9a;
}

.ad-url {
    padding-bottom: 5px;
    border-bottom: 1px solid #eaeaea;
    display: flex;
    align-items: center;
    gap: 5px;
    font-size: 9.2px;
    line-height: 12px;
    color: #2c7446;
}

.ad-url i {
    width: 13px;
    height: 10px;
    border: 1px solid #6d9c7e;
    font-style: normal;
    font-size: 8px;
    line-height: 8px;
    text-align: center;
}

.ad-text {
    margin-top: 5px;
    font-size: 8.4px;
    line-height: 12.7px;
    color: #777;
}

.scrollbar {
    position: absolute;
    right: 0;
    top: 257px;
    width: 5px;
    height: 88px;
    background: #a3a3a3;
}

/* Taskbar */
.taskbar {
    height: 34px;
    display: flex;
    align-items: center;
    background: linear-gradient(90deg, #201e30 0, #241b33 200px, #2f1838 300px, #291a28 420px, #2e1a1f 520px, #451415 640px, #451415 740px, #371817 900px, #2f1919 1000px);
    border-top: 3px solid #242224;
    font-family: "Open Sans", "Noto Sans", sans-serif;
    color: #ddd;
}

.win {
    margin-left: 328px;
}

.task-search {
    width: 63px;
    height: 22px;
    margin-left: 10px;
    padding-left: 13px;
    border-radius: 11px;
    background: #38232f;
    display: flex;
    align-items: center;
    gap: 3px;
    font-size: 7.3px;
}

.task {
    margin-left: 12.6px;
    position: relative;
}

.task.t1 {
    margin-left: 10px;
}

.task.open::after {
    content: "";
    position: absolute;
    left: 50%;
    bottom: -5px;
    width: 4px;
    height: 2px;
    margin-left: -2px;
    border-radius: 1px;
    background: #aaa;
}

.task.wide::after {
    width: 10px;
    margin-left: -5px;
    background: #6fb3ea;
}

.tray {
    margin-left: auto;
    margin-right: 12px;
    display: flex;
    align-items: center;
}

.sync {
    margin-left: 11px;
}

.mic {
    margin-left: 11px;
}

.kbd {
    margin-left: 11px;
}

.lang {
    margin: 0 13px 0 12px;
    font-size: 7.5px;
}

.vol {
    margin-left: 5px;
}

.bat {
    margin-left: 7px;
}

.clock {
    width: 50px;
    text-align: right;
    font-size: 7.6px;
    line-height: 11px;
}

/* Recorder overlays */
.bubble {
    position: absolute;
    left: 8px;
    top: 379px;
    width: 145px;
    height: 145px;
    border-radius: 50%;
    background: #316b1f;
    color: #fff;
    font-size: 79px;
    line-height: 146px;
    text-align: center;
    -webkit-text-stroke: .8px #fff;
}

.sharing {
    position: absolute;
    left: 310px;
    top: 487px;
    width: 380px;
    height: 27px;
    padding: 0 6px;
    background: #262626;
    box-shadow: 0 3px 7px rgba(0, 0, 0, .4);
    display: flex;
    align-items: center;
    font-family: "Open Sans", "Noto Sans", sans-serif;
    font-size: 8.65px;
    color: #e0e0e0;
}

.msg {
    margin-left: 6px;
    flex: 1;
}

.sharing button {
    width: 63px;
    height: 21px;
    padding: 0;
    border: 0;
    border-radius: 2px;
    background: #2764d8;
    color: #fff;
    font: inherit;
}

.sharing a {
    margin-left: 7px;
    font-size: 7.9px;
    text-decoration: underline;
}

.recorder {
    position: absolute;
    left: 164px;
    top: 485px;
    width: 198px;
    height: 34px;
    padding-left: 11px;
    border-radius: 8px;
    background: #262626;
    clip-path: polygon(0 0, 100% 0, 100% 2px, 148px 2px, 148px 29px, 100% 29px, 100% 100%, 0 100%);
    display: flex;
    align-items: center;
    color: #fff;
    font-family: Inter, sans-serif;
    font-weight: 600;
    font-size: 9.5px;
}

.stop {
    width: 23px;
    height: 23px;
    border: 6px solid #f25a38;
    border-radius: 8px;
    background: #fff;
}

.pause {
    margin-left: 8px;
}

.rewind {
    margin: 0 11px 0 12px;
}

.grip {
    margin-left: 21px;
}

.cursor {
    position: absolute;
    left: 968px;
    top: 329px;
}
```
